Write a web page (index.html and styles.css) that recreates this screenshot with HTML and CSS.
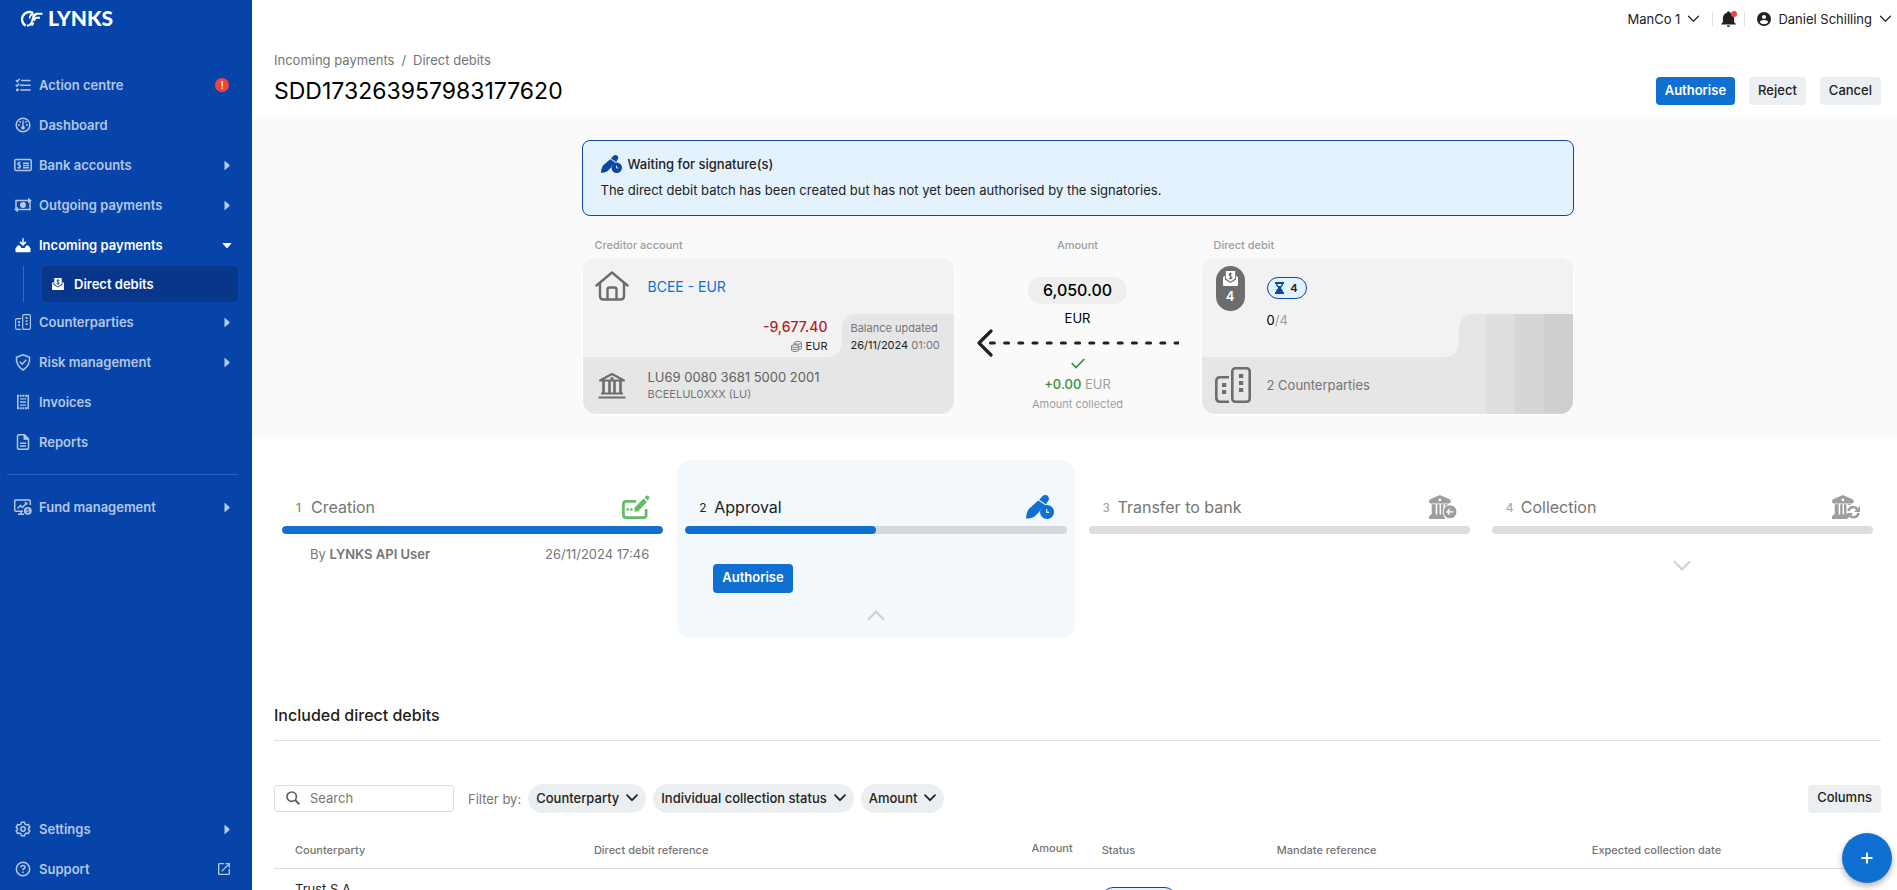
FILE: index.html
```html
<!DOCTYPE html>
<html lang="en">
<head>
<meta charset="utf-8">
<title>LYNKS – Direct debits</title>
<link rel="stylesheet" href="styles.css">
</head>
<body>
<svg class="sprite" aria-hidden="true">
  <symbol id="chev" viewBox="0 0 12 8"><path d="M1 1.2 6 6.2 11 1.2" fill="none" stroke="currentColor" stroke-width="var(--sw,1.3)" stroke-linecap="round"/></symbol>
  <symbol id="caret" viewBox="0 0 6 9"><path d="M.5 0H1L5.6 4.1v.8L1 9H.5z" fill="currentColor"/></symbol>
  <symbol id="pen-clock" viewBox="0 0 28 24">
    <path d="M12.300 5.600 3 13.800C.8 16.600.3 20 0 23.600c3.600 0 6.800-.4 9.200-2.600l4.300-4.400q1-4.500 6-6.400zM13.200 4.700l3-3.300c1.700-1.700 4.200-1.800 5.700-.3 1.500 1.500 1.400 3.900-.2 5.500l-1.500 2.800z" fill="currentColor"/>
    <circle cx="21" cy="17" r="7" fill="currentColor"/>
    <path d="M20.700 14v3.300h2.600" fill="none" stroke="#e3f1fd" stroke-width="1.200"/>
  </symbol>
  <symbol id="buildings" viewBox="0 0 36 36">
    <rect x="17.300" y="1.300" width="17.400" height="33.400" rx="3" fill="none" stroke="currentColor" stroke-width="2.600"/>
    <path d="M14 10.300H5q-3.700 0-3.700 3.700v17q0 3.700 3.700 3.700h9" fill="none" stroke="currentColor" stroke-width="2.600"/>
    <path d="M24 7h4.200v4H24zM24 14h4.200v4H24zM24 21h4.200v4H24zM7 16h4.200v4H7zM7 23h4.200v4H7z" fill="currentColor"/>
  </symbol>
  <symbol id="bank-solid" viewBox="0 0 26 24">
    <path d="M10.800 0 20 4q1.800.8 1.800 2.500 0 2-2 2H1.900Q0 8.500 0 6.500 0 4.800 1.600 4zM2.700 9.200h4v11h-4zM8.200 9.200h2.400v11H8.200zM12 9.200h2.400v11H12zM15.800 9.200h3.200v4h-3.200zM1.800 19.500H15v2l1.500 2.500H0v-2.500z" fill="currentColor"/>
    <circle cx="10.900" cy="4.900" r="1.300" fill="#fff"/>
  </symbol>
  <symbol id="envelope" viewBox="0 0 16 16">
    <path d="M3 0h10v8l-5 3.500L3 8z" fill="currentColor"/>
    <path d="M0 6.500 2 5v4l6 3.800L14 9V5l2 1.500V15q0 1-1 1H1q-1 0-1-1z" fill="currentColor"/>
    <path d="M9.800 3.200Q8 2.200 6.800 3.200T8 5.500 9.400 7.500 6.200 7.800M8 1.500V9" fill="none" stroke="var(--hole,#07368b)" stroke-width="1.100"/>
  </symbol>
</svg>
<div class="app">
  <nav class="sidebar" aria-label="Main">
    <a class="logo" href="#">
      <svg width="25" height="18" viewBox="0 0 25 18" fill="none" stroke="#fff">
        <path d="M7.600 16.600A7.300 7.300 0 1 1 15 4" stroke-width="2.400"/>
        <path d="M24.500 4.700h-5.500q-2.600 0-4.200 3.200M22 8.700h-3q-2 0-3 3M8.800 16.700q4 0 5.200-4.200Q15.200 7 18.500 4.800" stroke-width="2"/>
        <path d="M15.500 4.800Q11.500 5.500 11.700 9.500M15.500 13.500q-.5 2-2 3.200" stroke-width="1.700"/>
      </svg>
      <span>LYNKS</span>
    </a>
    <ul class="menu">
      <li><a class="item" href="#">
        <svg class="ico small" viewBox="0 0 18 18" fill="none" stroke="currentColor" stroke-width="1.700"><path d="M7 4h10.500M5.500 9.200h12M6 14.500h11.500M1 3.500l1.600 1.700L5.200 2M.8 8.800l1.500 1.500 2.300-2.900"/><circle cx="2.700" cy="14.500" r=".8"/></svg>
        <span>Action centre</span><span class="alert-dot">!</span></a></li>
      <li><a class="item" href="#">
        <svg class="ico small" viewBox="0 0 18 18"><circle cx="9" cy="9" r="7.700" fill="none" stroke="currentColor" stroke-width="1.700"/><path d="M8.200 4h1.600v6.500h-1.600z" fill="currentColor"/><circle cx="9" cy="12" r="2.100" fill="currentColor"/><g fill="currentColor"><circle cx="5.800" cy="5.500" r="1.100"/><circle cx="12.200" cy="5.500" r="1.100"/><circle cx="4.500" cy="9" r="1.100"/><circle cx="13.500" cy="9" r="1.100"/></g></svg>
        <span>Dashboard</span></a></li>
      <li><a class="item" href="#">
        <svg class="ico" viewBox="0 0 18 18" fill="none" stroke="currentColor" stroke-width="1.500"><rect x=".8" y="3.600" width="16.400" height="10.800" rx="1.500"/><path d="M9 7.200h6M9 9.500h6M9 11.700h6"/><path d="M6.600 6.900Q4.500 6 3.800 7.300T5.200 9t1.200 2-3 .6M5.200 5.500v7.500" stroke-width="1.100"/></svg>
        <span>Bank accounts</span><svg class="caret"><use href="#caret"/></svg></a></li>
      <li><a class="item" href="#">
        <svg class="ico" viewBox="0 0 18 18"><path d="M2 13V4.500h12.500M16 5v8.500H3" fill="none" stroke="currentColor" stroke-width="1.500"/><path d="M14 1.800 17.800 4.500 14 7.200zM4 10.800.2 13.500 4 16.200z" fill="currentColor"/><circle cx="9" cy="9" r="3" fill="currentColor"/></svg>
        <span>Outgoing payments</span><svg class="caret"><use href="#caret"/></svg></a></li>
      <li><a class="item active" href="#">
        <svg class="ico small" viewBox="0 0 18 18"><path d="M8.200 1.500h1.600v5.300l1.900-1.900 1.200 1.200L9 10 5.100 6.100l1.200-1.200 1.900 1.900z" fill="currentColor"/><path d="M3 9.500h2.500q.8 3 3.500 3t3.500-3H15l2.500 3.500v3q0 1.200-1.200 1.200H1.700Q.5 17.200.5 16v-3z" fill="currentColor"/></svg>
        <span>Incoming payments</span><svg class="caret open"><use href="#caret"/></svg></a>
        <ul class="submenu"><li><a class="subitem" href="#" aria-current="page"><svg width="12" height="12"><use href="#envelope"/></svg><span>Direct debits</span></a></li></ul></li>
      <li><a class="item" href="#"><svg class="ico small"><use href="#buildings"/></svg>
        <span>Counterparties</span><svg class="caret"><use href="#caret"/></svg></a></li>
      <li><a class="item" href="#">
        <svg class="ico" viewBox="0 0 18 18" fill="none" stroke="currentColor" stroke-width="1.500"><path d="M9 1.800 15.500 4.200q1 8-6.500 12.800Q1.500 12.200 2.500 4.200z" stroke-linejoin="round"/><path d="M5.700 8.800 8.200 11.200 12.300 6.800"/></svg>
        <span>Risk management</span><svg class="caret"><use href="#caret"/></svg></a></li>
      <li><a class="item" href="#">
        <svg class="ico" viewBox="0 0 18 18" fill="none" stroke="currentColor" stroke-width="1.500"><path d="M3.800 2v14M14.200 2v14"/><path d="M3 2.800h12M3 15.200h12" stroke-width="2" stroke-dasharray="2 .7"/><path d="M6 5.800h6M6 9h6M6 12.200h6" stroke-width="1.300"/></svg>
        <span>Invoices</span></a></li>
      <li><a class="item" href="#">
        <svg class="ico" viewBox="0 0 18 18" fill="none" stroke="currentColor" stroke-width="1.500"><path d="M4.500 1.800H10.500L14.500 5.800V15q0 1.200-1.200 1.200H5Q3.500 16.200 3.500 15V3z"/><path d="M10.200 2v4h4M6 10.200h6M6 13h6" stroke-width="1.400"/><path d="M10 1.500 14.700 6.300H10z" fill="currentColor" stroke="none"/></svg>
        <span>Reports</span></a></li>
    </ul>
    <hr class="rule">
    <ul class="menu second">
      <li><a class="item" href="#">
        <svg class="ico" viewBox="0 0 18 18" fill="none" stroke="currentColor" stroke-width="1.500"><path d="M9 13.200H2Q.7 13.200.7 12V3.300Q.7 2 2 2h13q1.300 0 1.300 1.300V7"/><path d="M3.500 10.500 6.500 7.500l2 2L12.500 5M4 16.300h6M7 13v3"/><path d="M10 4.300h3.300v3.300z" fill="currentColor" stroke="none"/><circle cx="13.800" cy="12.800" r="3.900" fill="currentColor" stroke="none"/><path d="M15 11.500Q13.500 10.500 12.800 11.600T13.800 12.900 14.900 14.200 12.500 14.200" stroke="#0644a9" stroke-width=".9"/></svg>
        <span>Fund management</span><svg class="caret"><use href="#caret"/></svg></a></li>
    </ul>
    <ul class="menu bottom">
      <li><a class="item" href="#">
        <svg class="ico small" viewBox="0 0 18 18" fill="none" stroke="currentColor" stroke-width="1.700" stroke-linejoin="round"><path d="M7.200 1.500h3.600l.5 2 1.600.9 2-.6 1.800 3.100L15.200 8.300v1.500l1.500 1.300-1.800 3.100-2-.6-1.600.9-.5 2H7.200l-.5-2-1.600-.9-2 .6-1.800-3.100 1.500-1.300V8.300L1.300 6.900l1.800-3.100 2 .6 1.600-.9z"/><circle cx="9" cy="9" r="2.400"/></svg>
        <span>Settings</span><svg class="caret"><use href="#caret"/></svg></a></li>
      <li><a class="item" href="#">
        <svg class="ico small" viewBox="0 0 18 18" fill="none" stroke="currentColor" stroke-width="1.700"><circle cx="9" cy="9" r="7.500"/><path d="M6.600 7.200Q6.700 5 9 5t2.300 2Q11.300 8.200 9 9.200v1.300M9 11.700v1.700"/></svg>
        <span>Support</span>
        <svg class="external" viewBox="3 3 18 18"><path d="M14,3V5H17.590L7.760,14.830L9.170,16.240L19,6.410V10H21V3M19,19H5V5H12V3H5C3.890,3 3,3.900 3,5V19A2,2 0 0,0 5,21H19A2,2 0 0,0 21,19V12H19V19Z" fill="currentColor"/></svg></a></li>
    </ul>
  </nav>

  <main class="main">
    <div class="topbar">
      <button class="plain" type="button">ManCo 1 <svg width="13" height="8"><use href="#chev"/></svg></button>
      <button class="plain bell" type="button" aria-label="Notifications">
        <svg width="15" height="16" viewBox="3 2 18 20"><path d="M21,18V19H3V18L5,16V11C5,7.900 7.030,5.170 10,4.290A2,2 0 0,1 14,4.290C16.970,5.170 19,7.900 19,11V16L21,18M14,20A2,2 0 0,1 10,20" fill="#212121"/></svg><span class="dot"></span>
      </button>
      <button class="plain" type="button">
        <svg class="avatar" width="14" height="14" viewBox="0 0 14 14"><circle cx="7" cy="7" r="7" fill="#212121"/><circle cx="7" cy="5" r="2.100" fill="#fff"/><path d="M2.800 10.200Q3.300 8 7 8t4.200 2.200Q9.800 12.300 7 12.300T2.800 10.200" fill="#fff"/></svg>
        Daniel Schilling <svg width="13" height="8"><use href="#chev"/></svg></button>
    </div>

    <header class="page-head">
      <div>
        <div class="crumbs"><a href="#">Incoming payments</a><span>/</span><a href="#">Direct debits</a></div>
        <h1>SDD173263957983177620</h1>
      </div>
      <div class="actions">
        <button class="btn primary" type="button">Authorise</button>
        <button class="btn" type="button">Reject</button>
        <button class="btn" type="button">Cancel</button>
      </div>
    </header>

    <section class="overview">
      <div class="notice">
        <h2><svg width="21" height="18"><use href="#pen-clock"/></svg>Waiting for signature(s)</h2>
        <p>The direct debit batch has been created but has not yet been authorised by the signatories.</p>
      </div>
      <div class="flow">
        <div class="party">
          <div class="label">Creditor account</div>
          <div class="card">
            <div class="card-top">
              <svg width="34" height="30" viewBox="0 0 34 30" fill="none" stroke="#6d6d6d" stroke-width="2.400" stroke-linecap="round" stroke-linejoin="round"><path d="M1.500 14.500 17 1.500l15.500 13M5 12v13q0 3.500 3.500 3.500h17q3.500 0 3.500-3.500V12"/><path d="M12.500 28V18.500q0-2 2-2h5q2 0 2 2V28"/></svg>
              <a class="acct" href="#">BCEE - EUR</a>
            </div>
            <div class="card-mid">
              <div class="mid-left balance">
                <div class="neg">-9,677.40</div>
                <div class="cur"><svg width="11" height="11" viewBox="0 0 12 12" fill="none" stroke="#757575"><ellipse cx="7.500" cy="2" rx="4" ry="1.500"/><ellipse cx="4.500" cy="5.500" rx="4" ry="1.500"/><path d="M3.500 2v2M11.500 2v6q-.5 1-2.500 1.300M.5 5.500V10q.5 1.500 4 1.500t4-1.500V5.500M.5 8q.5 1.300 4 1.300T8.500 8M9 6.500q2-.3 2.500-1.300"/></svg>EUR</div>
              </div>
              <div class="mid-right"><div class="tab">
                <div class="muted">Balance updated</div>
                <div>26/11/2024 <span class="muted">01:00</span></div>
              </div></div>
            </div>
            <div class="card-bottom">
              <svg width="34" height="27" viewBox="0 0 34 27" fill="none" stroke="#6d6d6d"><path d="M5 8.500 17 2l12 6.500z" stroke-width="2.200" stroke-linejoin="round"/><path d="M8.500 9v12M14.500 9v12M19.500 9v12M25.500 9v12" stroke-width="2.600"/><path d="M6 21.500h22M3.500 25.500h27" stroke-width="2.200"/><circle cx="17" cy="6.500" r="1.200" fill="#6d6d6d"/></svg>
              <div><div class="iban">LU69 0080 3681 5000 2001</div><div class="bic">BCEELUL0XXX (LU)</div></div>
            </div>
          </div>
        </div>

        <div class="amount">
          <div class="label">Amount</div>
          <div class="sum">6,050.00</div>
          <div class="sum-cur">EUR</div>
          <svg class="arrow" width="202" height="28" viewBox="0 0 202 28" fill="none" stroke="#212121"><path d="M14 2 2 14l12 12" stroke-width="3.200" stroke-linecap="round" stroke-linejoin="round"/><path d="M13.500 14H202" stroke-width="3.200" stroke-linecap="round" stroke-dasharray="3.800 10.400"/></svg>
          <svg class="check" width="14" height="11" viewBox="0 0 14 11" fill="none" stroke="#388e3c" stroke-width="1.700"><path d="M.7 5 5 9.500 13.300 1"/></svg>
          <div class="collected"><b>+0.00</b> EUR</div>
          <div class="caption">Amount collected</div>
        </div>

        <div class="party">
          <div class="label">Direct debit</div>
          <div class="card striped">
            <div class="card-top">
              <div class="slot"><div class="count"><svg width="15" height="15"><use href="#envelope"/></svg>4</div></div>
              <span class="chip"><svg width="9" height="12" viewBox="0 0 9 12" fill="#0d47a1"><path d="M0 0h9v2H8q0 2.500-2.300 4Q8 7.500 8 10h1v2H0v-2h1q0-2.500 2.300-4Q1 4.500 1 2H0z"/><path d="M2.500 2h4q-.2 1.300-.8 2H3.300q-.6-.7-.8-2" fill="#e3f2fd"/></svg>4</span>
            </div>
            <div class="card-mid">
              <div class="mid-left progress"><span>0<i>/4</i></span></div>
              <div class="mid-right wide"><div class="tab"></div></div>
            </div>
            <div class="card-bottom">
              <svg class="slate" width="36" height="36"><use href="#buildings"/></svg>
              <div class="parties">2 Counterparties</div>
            </div>
          </div>
        </div>
      </div>
    </section>

    <section class="steps">
      <div class="step done">
        <div class="step-head"><small>1</small><span>Creation</span>
          <svg width="28" height="24" viewBox="0 0 28 24" fill="none" stroke="#66bb6a" stroke-width="2.800"><path d="M14 6.400H4q-2.600 0-2.600 2.600v11q0 2.600 2.600 2.600h17.500q2.600 0 2.600-2.600v-6"/><path d="M12.500 16.500v-3.700L21.500 3.500l3.500 3.500-9 9.500zM22.500 2.400 24 1q1.200-1 2.600.2t.2 2.800l-1.300 1.500z" fill="#66bb6a" stroke="none"/><path d="M4.500 14.500h2.300M8.300 14.500h2.300" stroke-width="2.400"/></svg></div>
        <div class="bar"><div class="fill" style="width:100%"></div></div>
        <div class="step-info"><span>By <b>LYNKS API User</b></span><span>26/11/2024 17:46</span></div>
      </div>
      <div class="step current">
        <div class="step-head"><small>2</small><span>Approval</span><svg class="blue" width="28" height="24"><use href="#pen-clock"/></svg></div>
        <div class="bar"><div class="fill" style="width:50%"></div></div>
        <div class="step-action"><button class="btn primary" type="button">Authorise</button></div>
        <button class="toggle" type="button" aria-label="Collapse"><svg class="up" width="18" height="12"><use href="#chev"/></svg></button>
      </div>
      <div class="step">
        <div class="step-head"><small>3</small><span>Transfer to bank</span>
          <svg class="grey" width="28" height="24" viewBox="0 0 28 24"><use href="#bank-solid" width="26" height="24"/><circle cx="21" cy="16.800" r="7" fill="currentColor" stroke="#fff"/><path d="M24.500 16.800h-6M20.800 14l-2.700 2.800 2.700 2.800" fill="none" stroke="#fff" stroke-width="1.300"/></svg></div>
        <div class="bar"></div>
      </div>
      <div class="step">
        <div class="step-head"><small>4</small><span>Collection</span>
          <svg class="grey" width="28" height="24" viewBox="0 0 28 24"><use href="#bank-solid" width="26" height="24"/><rect x="15" y="10" width="13" height="14" fill="#fff"/><g fill="none" stroke="currentColor" stroke-width="2.600"><path d="M16.500 16q1-4 4.700-4 2.500 0 4 2.300M26.500 18q-1 4.300-4.900 4.300-2.500 0-4-2.300"/></g><path d="M28 11v6h-6zM15 24v-6h6z" fill="currentColor"/></svg></div>
        <div class="bar"></div>
        <button class="toggle near" type="button" aria-label="Expand"><svg width="18" height="12"><use href="#chev"/></svg></button>
      </div>
    </section>

    <section class="list">
      <h2>Included direct debits</h2>
      <div class="filters">
        <label class="search"><svg width="14" height="14" viewBox="0 0 14 14" fill="none" stroke="#616161" stroke-width="1.700"><circle cx="5.700" cy="5.700" r="4.700"/><path d="m9 9 4.300 4.300" stroke-width="2"/></svg><input type="search" placeholder="Search" aria-label="Search"></label>
        <span class="by">Filter by:</span>
        <button class="pill" type="button">Counterparty<svg width="12" height="8"><use href="#chev"/></svg></button>
        <button class="pill" type="button">Individual collection status<svg width="12" height="8"><use href="#chev"/></svg></button>
        <button class="pill" type="button">Amount<svg width="12" height="8"><use href="#chev"/></svg></button>
        <button class="btn columns" type="button">Columns</button>
      </div>
      <table>
        <colgroup><col class="c1"><col class="c2"><col class="c3"><col class="c4"><col class="c5"><col class="c6"></colgroup>
        <thead><tr><th>Counterparty</th><th>Direct debit reference</th><th class="num">Amount</th><th>Status</th><th>Mandate reference</th><th>Expected collection date</th></tr></thead>
        <tbody><tr><td>Trust S.A.</td><td></td><td></td><td><span class="status"></span></td><td></td><td></td></tr></tbody>
      </table>
    </section>
    <button class="fab" type="button" aria-label="Add"><svg width="12" height="12" viewBox="0 0 12 12"><path d="M6 .5v11M.5 6h11" stroke="#fff" stroke-width="1.800"/></svg></button>
  </main>
</div>
</body>
</html>
```
FILE: styles.css
```css
* { box-sizing: border-box; }
body { margin: 0; font-family: Inter, "Liberation Sans", sans-serif; font-size: 13px; color: #212121; background: #fff; overflow: hidden; }
ul { list-style: none; margin: 0; padding: 0; }
a { color: inherit; text-decoration: none; }
button { font: inherit; color: inherit; border: 0; background: none; padding: 0; cursor: pointer; }
h1, h2, p { margin: 0; }
svg { flex: none; display: block; }
.sprite { position: absolute; width: 0; height: 0; }

.app { display: grid; grid-template-columns: 252px 1fr; height: 100vh; }

/* Sidebar */
.sidebar { background: #0644a9; color: #b4c7e5; display: flex; flex-direction: column; padding-bottom: 1px; }
.logo { display: flex; align-items: center; gap: 5px; height: 65px; padding: 2px 18px 31px; color: #fff; font: 900 21px/24px Lato, sans-serif; }
.item { display: flex; align-items: center; height: 40px; padding: 0 22px 0 14px; font-weight: 600; }
.item > span { flex: 1; }
.ico { width: 18px; height: 18px; margin-right: 7px; }
.ico.small { width: 16px; height: 16px; margin: 0 8px 0 1px; }
.item .alert-dot { flex: none; width: 14px; height: 14px; margin-right: 1px; border-radius: 50%; background: #f44336; color: #fff; font-size: 10px; line-height: 14px; text-align: center; }
.caret { width: 6px; height: 9px; }
.caret.open { transform: rotate(90deg); }
.item.active { color: #fff; }
.submenu { margin: 1px 14px 0 23px; padding-left: 18px; border-left: 1px solid #3669ba; }
.subitem { display: flex; align-items: center; gap: 10px; height: 36px; padding: 0 10px; border-radius: 4px; background: #07368b; color: #fff; font-weight: 600; }
.rule { width: 231px; margin: 12px 0 12px 7px; border: 0; border-top: 1px solid #2e62b7; }
.bottom { margin-top: auto; }
.external { width: 12px; height: 12px; }

/* Header */
.main { position: relative; min-width: 0; overflow: hidden; }
.topbar { display: flex; justify-content: flex-end; align-items: center; height: 37px; padding-right: 5px; }
.plain { display: flex; align-items: center; gap: 7px; height: 14px; }
.bell { position: relative; margin: 0 12px; padding: 0 8px; border: solid #e0e0e0; border-width: 0 1px; }
.bell .dot { position: absolute; top: -1px; right: 7px; width: 6px; height: 6px; border-radius: 50%; background: #f44336; }
.page-head { display: flex; justify-content: space-between; align-items: flex-end; padding: 14px 16px 14px 22px; height: 82px; }
.crumbs { display: flex; gap: 7px; line-height: 18px; color: #757575; }
h1 { font-size: 23px; font-weight: 400; line-height: 28px; margin-top: 8px; color: #000; }
.actions { display: flex; gap: 14px; }
.btn { height: 28px; padding: 0 9px 3px; border-radius: 4px; background: #eceff1; font-weight: 500; }
.btn.primary { background: #1070d1; color: #fff; font-weight: 600; }

/* Overview */
.overview { background: #fafafa; padding: 21px 16px 22px 22px; }
.notice, .flow { width: 100%; max-width: 992px; margin: 0 auto; }
.notice { border: 1px solid #0d47a1; border-radius: 8px; background: #e3f2fd; padding: 13px 18px 16px; }
.notice h2 { display: flex; align-items: center; gap: 6px; font-size: 13px; font-weight: 500; line-height: 20px; }
.notice h2 svg { color: #0d47a1; }
.notice p { line-height: 18px; margin-top: 7px; }
.flow { display: grid; grid-template-columns: 373px 1fr 373px; margin-top: 21px; }
.label { font-size: 11px; font-weight: 500; line-height: 16px; color: #9e9e9e; padding-left: 13px; }
.card { position: relative; margin-top: 4px; border: 1px solid #fff; border-radius: 14px; overflow: hidden; background: #e6e6e6; }
.card-top { display: flex; gap: 19px; align-items: flex-start; height: 56px; padding: 13px 12px 0; background: #f2f2f2; }
.acct { color: #1070d1; font-size: 14px; line-height: 32px; }
.card-mid { display: flex; height: 43px; background: #e6e6e6; }
.mid-left { flex: 1; background: #f2f2f2; border-bottom-right-radius: 14px; padding-right: 14px; }
.mid-right { width: 112px; background: #f2f2f2; font-size: 11px; }
.mid-right.wide { width: 114px; }
.tab { height: 100%; padding: 6px 0 0 9px; border-top-left-radius: 14px; background: #e6e6e6; line-height: 17px; }
.balance { text-align: right; }
.neg { color: #b71c1c; font-size: 14px; font-weight: 500; line-height: 26px; }
.cur { display: flex; justify-content: flex-end; align-items: center; gap: 4px; font-size: 11px; line-height: 12px; }
.muted { color: #757575; }
.card-bottom { display: flex; gap: 19px; align-items: center; height: 57px; padding: 0 12px; color: #616161; }
.iban { font-size: 13px; line-height: 18px; }
.bic { font-size: 11px; line-height: 17px; color: #757575; }
.striped::after { content: ""; position: absolute; right: 0; bottom: 0; width: 87px; height: 100px; background: linear-gradient(90deg, #dedede 33%, #d6d6d6 33% 67%, #cfcfcf 67%); }
.striped .card-top { padding-top: 8px; gap: 22px; }
.slot { width: 29px; margin-left: 2px; z-index: 1; }
.count { display: flex; flex-direction: column; align-items: center; gap: 2px; height: 45px; padding-top: 5px; border-radius: 15px; background: #6d6d6d; color: #fff; font-weight: 600; --hole: #6d6d6d; }
.chip { display: flex; align-items: center; justify-content: center; gap: 6px; width: 40px; height: 22px; margin-top: 11px; border: 1px solid #0d47a1; border-radius: 11px; background: #e3f2fd; font-size: 11px; font-weight: 600; }
.progress { padding-left: 65px; line-height: 12px; color: #000; }
.progress i { font-style: normal; color: #9e9e9e; }
.slate { color: #6d6d6d; }
.striped .card-bottom { gap: 16px; padding: 0 13px 1px; }
.parties { color: #757575; }
.amount { text-align: center; display: flex; flex-direction: column; align-items: center; }
.amount .label { padding: 0; }
.sum { margin-top: 24px; padding: 0 15px; height: 27px; border-radius: 14px; background: #eee; color: #000; font-size: 16px; font-weight: 500; line-height: 27px; }
.sum-cur { margin-top: 5px; line-height: 18px; color: #000; }
.arrow { margin-top: 2px; }
.check { margin-top: 1px; }
.collected { margin-top: 5px; line-height: 20px; color: #9e9e9e; }
.collected b { color: #388e3c; font-weight: 500; }
.caption { font-size: 11px; line-height: 20px; color: #9e9e9e; }

/* Steps */
.steps { display: grid; grid-template-columns: repeat(4, 1fr); gap: 6px; padding: 23px 16px 0 22px; align-items: start; color: #757575; }
.step { padding: 35px 8px 17px; border-radius: 14px; }
.step.current { background: #f3f8fd; color: #212121; }
.step-head { display: flex; align-items: center; height: 24px; padding: 0 13px 0 14px; font-size: 16px; }
.step-head small { width: 15px; font-size: 12px; }
.step-head span { flex: 1; }
.step:not(.done):not(.current) small { color: #9e9e9e; }
.bar { margin-top: 7px; height: 8px; border-radius: 4px; background: #ddd; overflow: hidden; }
.current .bar { background: #d5d8dc; }
.fill { height: 8px; border-radius: 4px; background: #1070d1; }
.step-info { display: flex; justify-content: space-between; padding: 11px 14px 0 28px; line-height: 18px; }
.step-info b { font-weight: 600; }
.step-action { padding: 30px 28px 0; }
.step-action .btn { height: 29px; display: block; }
.toggle { display: block; margin: 16px auto 0; color: #cfd3d7; --sw: 1.500; }
.toggle.near { margin-top: 26px; }
.up { transform: rotate(180deg); }
.blue { color: #1070d1; }
.grey { color: #9e9e9e; }

/* List */
.list { padding: 65px 16px 0 22px; }
.list h2 { font-size: 16px; font-weight: 500; line-height: 24px; padding-bottom: 13px; border-bottom: 1px solid #e0e0e0; }
.filters { display: flex; align-items: center; gap: 7px; margin-top: 43px; }
.search { display: flex; align-items: center; gap: 10px; width: 180px; height: 27px; padding: 0 11px 1px; border: 1px solid #ddd; border-radius: 3px; }
.search input { border: 0; outline: 0; width: 100%; padding: 0; font: inherit; background: none; }
.search input::placeholder { color: #757575; opacity: 1; }
.by { margin-left: 7px; color: #757575; }
.pill { display: flex; align-items: center; gap: 7px; height: 29px; padding: 0 8px 2px; border-radius: 15px; background: #eceff1; font-weight: 500; --sw: 1.700; }
.columns { margin-left: auto; }
table { width: 100%; margin-top: 18px; border-collapse: collapse; table-layout: fixed; }
.c1 { width: 18.6%; } .c2 { width: 20.4%; } .c3 { width: 11.2%; } .c4 { width: 10.9%; } .c5 { width: 19.6%; } .c6 { width: 19.3%; }
th { height: 37px; padding: 2px 0 0 21px; border-bottom: 1px solid #ddd; text-align: left; font-size: 11px; font-weight: 500; color: #757575; }
th.num { text-align: right; padding: 0 8px 2px 0; }
td { height: 60px; padding: 11px 0 0 21px; vertical-align: top; line-height: 18px; }
.status { display: block; width: 74px; height: 22px; margin-top: 7px; border: 1px solid #0d47a1; border-radius: 11px; background: #e3f2fd; }
.fab { position: absolute; right: 5px; bottom: 7px; display: grid; place-items: center; width: 50px; height: 50px; border-radius: 50%; background: #1070d1; box-shadow: 0 3px 6px rgba(0, 0, 0, .3); }
```
